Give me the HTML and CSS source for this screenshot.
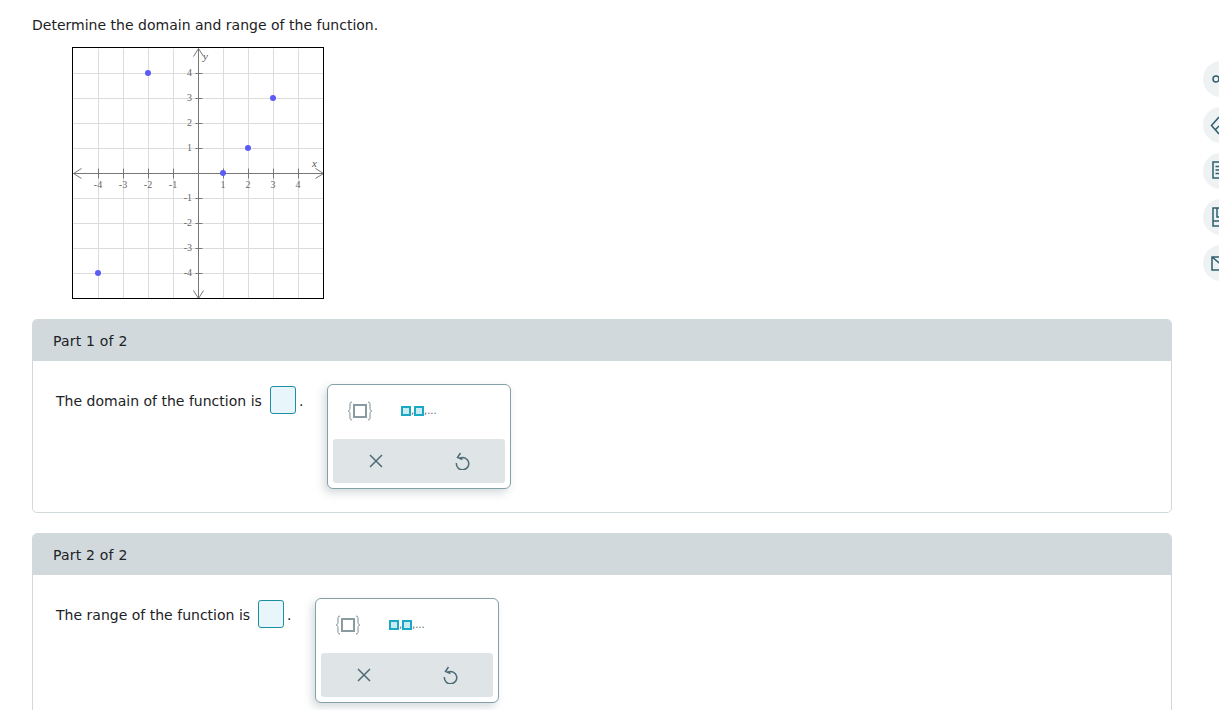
FILE: index.html
```html
<!DOCTYPE html>
<html lang="en">
<head>
<meta charset="utf-8">
<title>Domain and range</title>
<link rel="stylesheet" href="styles.css">
</head>
<body>
<main class="page">
  <p class="prompt">Determine the domain and range of the function.</p>
  <svg class="graph" width="252" height="252" viewBox="72 47 252 252">
    <g class="grid" transform="translate(.5 .5)">
      <path d="M98 48V298M123 48V298M148 48V298M173 48V298M223 48V298M248 48V298M273 48V298M298 48V298"/>
      <path d="M73 73H323M73 98H323M73 123H323M73 148H323M73 198H323M73 223H323M73 248H323M73 273H323"/>
    </g>
    <g class="axis" transform="translate(.5 .5)">
      <path d="M73 173H323M198 48V298"/>
      <path d="M81 168L73 173L81 178M315 168L323 173L315 178M193 56L198 48L203 56M193 290L198 298L203 290"/>
      <path d="M98 168V178M123 168V178M148 168V178M173 168V178M223 168V178M248 168V178M273 168V178M298 168V178"/>
      <path d="M195 73H202M195 98H202M195 123H202M195 148H202M195 198H202M195 223H202M195 248H202M195 273H202"/>
    </g>
    <g class="ticks">
      <text x="98" y="188" text-anchor="middle">-4</text><text x="123" y="188" text-anchor="middle">-3</text>
      <text x="148" y="188" text-anchor="middle">-2</text><text x="173" y="188" text-anchor="middle">-1</text>
      <text x="223" y="188" text-anchor="middle">1</text><text x="248" y="188" text-anchor="middle">2</text>
      <text x="273" y="188" text-anchor="middle">3</text><text x="298" y="188" text-anchor="middle">4</text>
      <text x="192" y="76" text-anchor="end">4</text><text x="192" y="101" text-anchor="end">3</text>
      <text x="192" y="126" text-anchor="end">2</text><text x="192" y="151" text-anchor="end">1</text>
      <text x="192" y="201" text-anchor="end">-1</text><text x="192" y="226" text-anchor="end">-2</text>
      <text x="192" y="251" text-anchor="end">-3</text><text x="192" y="276" text-anchor="end">-4</text>
      <text class="var" x="203" y="60">y</text><text class="var" x="312" y="167">x</text>
    </g>
    <g class="points">
      <circle cx="148" cy="73" r="3"/><circle cx="273" cy="98" r="3"/><circle cx="248" cy="148" r="3"/>
      <circle cx="223" cy="173" r="3"/><circle cx="98" cy="273" r="3"/>
    </g>
  </svg>

  <section class="part">
    <h2 class="part-head">Part 1 of 2</h2>
    <div class="part-body">
      <span class="sentence">The domain of the function is</span>
      <span class="answer"></span><span class="stop">.</span>
      <div class="palette">
        <div class="palette-top">
          <svg class="sym-set" width="26" height="22" viewBox="0 0 26 22"><path class="brace" d="M5 2C2.500 2 3 4 3 7C3 9.500 2.800 10.500 1.300 11C2.800 11.500 3 12.500 3 15C3 18 2.500 20 5 20M21 2C23.500 2 23 4 23 7C23 9.500 23.200 10.500 24.700 11C23.200 11.500 23 12.500 23 15C23 18 23.500 20 21 20"/><rect class="slot" x="7" y="5" width="12" height="12"/></svg>
          <span class="sym-list"><i class="mini"></i><b class="sep">,</b><i class="mini"></i><b>,...</b></span>
        </div>
        <div class="palette-bar">
          <svg width="16" height="16" viewBox="0 0 16 16"><path class="tool" d="M2 2L14 14M14 2L2 14"/></svg>
          <svg width="16" height="18" viewBox="0 0 16 18"><path class="tool" d="M6 6A6.200 6.200 0 1 1 2.400 11M6.500 1L3.500 5.500L8.500 7.500"/></svg>
        </div>
      </div>
    </div>
  </section>

  <section class="part">
    <h2 class="part-head">Part 2 of 2</h2>
    <div class="part-body">
      <span class="sentence">The range of the function is</span>
      <span class="answer"></span><span class="stop">.</span>
      <div class="palette">
        <div class="palette-top">
          <svg class="sym-set" width="26" height="22" viewBox="0 0 26 22"><path class="brace" d="M5 2C2.500 2 3 4 3 7C3 9.500 2.800 10.500 1.300 11C2.800 11.500 3 12.500 3 15C3 18 2.500 20 5 20M21 2C23.500 2 23 4 23 7C23 9.500 23.200 10.500 24.700 11C23.200 11.500 23 12.500 23 15C23 18 23.500 20 21 20"/><rect class="slot" x="7" y="5" width="12" height="12"/></svg>
          <span class="sym-list"><i class="mini"></i><b class="sep">,</b><i class="mini"></i><b>,...</b></span>
        </div>
        <div class="palette-bar">
          <svg width="16" height="16" viewBox="0 0 16 16"><path class="tool" d="M2 2L14 14M14 2L2 14"/></svg>
          <svg width="16" height="18" viewBox="0 0 16 18"><path class="tool" d="M6 6A6.200 6.200 0 1 1 2.400 11M6.500 1L3.500 5.500L8.500 7.500"/></svg>
        </div>
      </div>
    </div>
  </section>
</main>

<aside class="rail">
  <div class="rail-btn"><svg width="20" height="20" viewBox="0 0 20 20"><circle class="rail-ico" cx="13" cy="10" r="3"/></svg></div>
  <div class="rail-btn"><svg width="20" height="20" viewBox="0 0 20 20"><path class="rail-ico" d="M16 2L8.500 10.500L16 19M12 15L16 11"/></svg></div>
  <div class="rail-btn"><svg width="20" height="20" viewBox="0 0 20 20"><path class="rail-ico" d="M10 17V1H24V17ZM12.500 5.500H20M12.500 9H20M12.500 12.500H20"/></svg></div>
  <div class="rail-btn"><svg width="20" height="20" viewBox="0 0 20 20"><path class="rail-ico" d="M10 19V1H24V19ZM10 14H24M14 1V10H24"/></svg></div>
  <div class="rail-btn"><svg width="20" height="20" viewBox="0 0 20 20"><path class="rail-ico" d="M9 4H24V17H9ZM9 4L17 10.500"/></svg></div>
</aside>
</body>
</html>
```
FILE: styles.css
```css
* { box-sizing: border-box; }
html, body { margin: 0; height: 710px; overflow: hidden; background: #fff; }
body {
  position: relative;
  font-family: "DejaVu Sans", Verdana, sans-serif;
  font-size: 14px;
  color: #1c2226;
}
.page { padding: 16px 47px 0 32px; }
.prompt { margin: 0; line-height: 18px; letter-spacing: .01px; }
.graph { display: block; margin: 13px 0 20px 40px; background: #fff; border: 0; outline: 1px solid #000; outline-offset: -1px; }
.grid path { fill: none; stroke: #dcdcdc; stroke-width: 1; }
.axis path { fill: none; stroke: #777; stroke-width: 1; }
.ticks text { font-family: "Liberation Serif", "DejaVu Serif", serif; font-size: 10px; fill: #666; }
.ticks .var { font-style: italic; font-size: 11px; fill: #555; }
.points circle { fill: #5b5bf5; }

.part { height: 194px; margin-bottom: 20px; border: 1px solid #d1d9dc; border-radius: 5px; overflow: hidden; }
.part-head { margin: -1px -1px 0; height: 42px; padding: 0 21px; background: #d1d9dc; font-size: 14px; font-weight: 400; line-height: 44px; letter-spacing: .2px; }
.part-body { display: flex; align-items: flex-start; padding: 23px 0 0 23px; }
.sentence { width: 207px; margin-top: 8px; line-height: 18px; letter-spacing: .01px; white-space: nowrap; }
.part:last-child .sentence { width: 195px; }
.answer { width: 26px; height: 28px; margin: 2px 0 0 7px; background: #e8f5fa; border: 1px solid #1c8ea3; border-radius: 3px; }
.stop { width: 31px; margin-top: 8px; padding-left: 3px; line-height: 18px; }
.palette { width: 184px; height: 105px; padding: 5px; background: #fff; border: 1px solid #84a0a8; border-radius: 6px; box-shadow: -3px 4px 8px rgba(90, 110, 120, .25); }
.palette-top { display: flex; align-items: flex-start; height: 49px; padding: 10px 0 0 14px; }
.brace { fill: none; stroke: #7e8f96; stroke-width: 1; }
.slot { fill: #fff; stroke: #8a9aa1; stroke-width: 2; }
.sym-list { display: flex; align-items: flex-end; margin: 6px 0 0 28px; height: 10px; font-size: 10px; line-height: 10px; color: #4d6b75; }
.sym-list b { font-weight: 400; }
.sym-list .sep { width: 3px; }
.mini { display: block; width: 10px; height: 10px; background: #c9ebf2; border: 2px solid #1ba8c4; }
.palette-bar { display: flex; justify-content: space-around; align-items: center; height: 44px; background: #dfe5e7; border-radius: 3px; }
.tool { fill: none; stroke: #4d6b75; stroke-width: 1.500; }

.rail { position: absolute; top: 61px; left: 1203px; display: flex; flex-direction: column; gap: 10px; }
.rail-btn { display: flex; align-items: center; width: 36px; height: 36px; border-radius: 50%; background: #eff2f3; }
.rail-btn svg { overflow: visible; }
.rail-ico { fill: none; stroke: #2e5f6e; stroke-width: 1.500; }
```
